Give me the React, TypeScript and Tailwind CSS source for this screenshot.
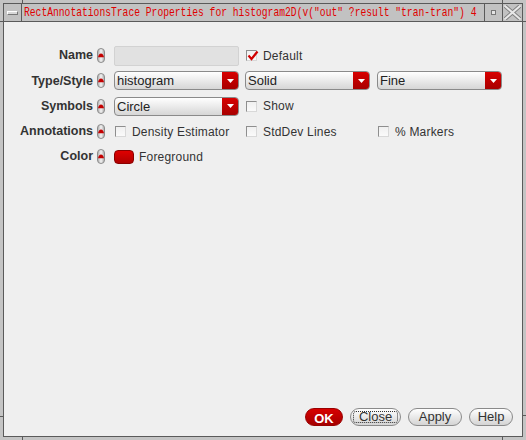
import React from "react";

const sans = "font-['Liberation_Sans',Arial,sans-serif]";

function Spinner() {
  return (
    <svg width="8" height="15" viewBox="0 0 8 15" className="shrink-0">
      <defs>
        <linearGradient id="spg" x1="0" y1="0" x2="1" y2="0">
          <stop offset="0" stopColor="#a8a8a8" />
          <stop offset="0.5" stopColor="#f4f4f4" />
          <stop offset="1" stopColor="#a8a8a8" />
        </linearGradient>
      </defs>
      <rect x="0.5" y="0.5" width="7" height="14" rx="3.5" fill="url(#spg)" stroke="#8c8c8c" />
      <path d="M1 9.2 C1.4 7 2.6 5.4 4 5.4 C5.4 5.4 6.6 7 7 9.2 Z" fill="#c40000" />
    </svg>
  );
}

function Checkbox({ checked }: { checked?: boolean }) {
  return (
    <div className="relative w-[11px] h-[11px] shrink-0 ml-[1px] border-t border-l border-[#8e8e8e] border-b border-r border-b-[#d8d8d8] border-r-[#d8d8d8] bg-gradient-to-b from-[#f0f0f0] to-[#fafafa]">
      {checked && (
        <svg width="12" height="11" viewBox="0 0 12 11" className="absolute left-[0px] top-[-1px]">
          <path d="M1.5 5.5 L4.5 9 L10.5 1.5" fill="none" stroke="#d00000" strokeWidth="2.2" />
        </svg>
      )}
    </div>
  );
}

function Combo({ value }: { value: string }) {
  return (
    <div className="flex w-[125px] h-[19px] rounded-[4px] border border-[#8a8a8a] bg-gradient-to-b from-white to-[#d6d6d6] overflow-hidden">
      <div className={`flex-1 pl-[2px] leading-[17px] text-[13px] text-[#222] ${sans}`}>{value}</div>
      <div className="w-[16px] h-full bg-gradient-to-b from-[#d80000] to-[#a80000] flex items-center justify-center">
        <svg width="7" height="4" viewBox="0 0 7 4">
          <path d="M0 0 L7 0 L3.5 4 Z" fill="#fff" />
        </svg>
      </div>
    </div>
  );
}

function CheckItem({ label, checked }: { label: string; checked?: boolean }) {
  return (
    <div className="flex items-center w-[125px]">
      <Checkbox checked={checked} />
      <span className={`ml-[6px] text-[12px] text-[#333] tracking-[0.2px] ${sans}`}>{label}</span>
    </div>
  );
}

function Row({ label, children }: { label: string; children: React.ReactNode }) {
  return (
    <div className="flex items-center h-[25.3px]">
      <div className={`w-[89px] text-right font-bold text-[12.5px] text-[#333] ${sans}`}>{label}</div>
      <div className="ml-[4px]">
        <Spinner />
      </div>
      <div className="ml-[9px] flex items-center gap-[6px]">{children}</div>
    </div>
  );
}

function PillButton({ label, focus }: { label: string; focus?: boolean }) {
  return (
    <button
      className={`relative h-[18px] rounded-full border border-[#8a8a8a] bg-gradient-to-b from-white to-[#d4d4d4] text-[13px] text-[#333] ${sans} flex items-center justify-center`}
    >
      {focus && <span className="absolute inset-x-[2px] inset-y-[2px] border border-dotted border-[#333] rounded-[3px]" />}
      {label}
    </button>
  );
}

export default function App() {
  return (
    <div className="relative w-[526px] h-[440px] bg-[#c4c4c4] p-[3px]">
      <div className="h-full border border-[#5a5a5a] flex flex-col">
        {/* title bar */}
        <div className="h-[18px] flex border-b border-[#5a5a5a] bg-[#c2c2c2] shrink-0">
          <div className="w-[18px] border-r border-[#5a5a5a] flex items-center justify-center">
            <div className="w-[11px] h-[4px] bg-[#d8d8d8] border-t border-l border-white border-b border-r border-b-[#777] border-r-[#777]" />
          </div>
          <div className="flex-1 overflow-hidden pl-[2px]">
            <div className="origin-left scale-x-[0.716] whitespace-nowrap font-['Liberation_Mono',monospace] text-[13.5px] leading-[17px] text-[#e00000]">
              RectAnnotationsTrace Properties for histogram2D(v("out" ?result "tran-tran") 4
            </div>
          </div>
          <div className="w-[18px] border-l border-[#5a5a5a] flex items-center justify-center">
            <div className="w-[5px] h-[5px] bg-[#e4e4e4] border border-[#777]" />
          </div>
          <div className="w-[20px] border-l border-[#5a5a5a] flex items-center justify-center">
            <svg width="17" height="15" viewBox="0 0 17 15">
              <path d="M1 1 L16 14 M16 1 L1 14" stroke="#808080" strokeWidth="4" strokeLinecap="square" />
              <path d="M1 1 L16 14 M16 1 L1 14" stroke="#e8e8e8" strokeWidth="2" strokeLinecap="square" />
            </svg>
          </div>
        </div>

        {/* content */}
        <div className="flex-1 bg-[#efefef] flex flex-col pt-[21px]">
          <Row label="Name">
            <div className="w-[125px] h-[20px] rounded-[2px] bg-[#e1e1e1] border border-[#d2d2d2]" />
            <CheckItem label="Default" checked />
          </Row>
          <Row label="Type/Style">
            <Combo value="histogram" />
            <Combo value="Solid" />
            <div className="ml-[1px]">
              <Combo value="Fine" />
            </div>
          </Row>
          <Row label="Symbols">
            <Combo value="Circle" />
            <CheckItem label="Show" />
          </Row>
          <Row label="Annotations">
            <CheckItem label="Density Estimator" />
            <CheckItem label="StdDev Lines" />
            <div className="ml-[1px]">
              <CheckItem label="% Markers" />
            </div>
          </Row>
          <Row label="Color">
            <div className="flex items-center">
              <div className="w-[20px] h-[14px] rounded-[4px] bg-gradient-to-b from-[#e00000] to-[#b00000] border border-[#8a0000]" />
              <span className={`ml-[5px] text-[12px] text-[#333] tracking-[0.2px] ${sans}`}>Foreground</span>
            </div>
          </Row>

          <div className="flex-1" />
          <div className="flex justify-end gap-[7px] pr-[9px] pb-[10px]">
            <button className={`w-[38px] h-[18px] rounded-full bg-gradient-to-b from-[#d80000] to-[#a40000] border border-[#900] text-white font-bold text-[13px] ${sans}`}>
              OK
            </button>
            <div className="w-[51px] flex flex-col">
              <PillButton label="Close" focus />
            </div>
            <div className="w-[54px] flex flex-col">
              <PillButton label="Apply" />
            </div>
            <div className="w-[44px] flex flex-col">
              <PillButton label="Help" />
            </div>
          </div>
        </div>
      </div>

      {/* frame resize handles */}
      <div className="absolute left-0 top-[21px] w-[3px] h-[1px] bg-[#5a5a5a]" />
      <div className="absolute left-0 top-[416px] w-[3px] h-[1px] bg-[#5a5a5a]" />
      <div className="absolute right-0 top-[21px] w-[3px] h-[1px] bg-[#5a5a5a]" />
      <div className="absolute right-0 top-[415px] w-[3px] h-[1px] bg-[#5a5a5a]" />
      <div className="absolute left-[22px] bottom-0 w-[1px] h-[3px] bg-[#5a5a5a]" />
      <div className="absolute left-[502px] bottom-0 w-[1px] h-[3px] bg-[#5a5a5a]" />
      <div className="absolute left-[22px] top-0 w-[1px] h-[3px] bg-[#5a5a5a]" />
      <div className="absolute left-[502px] top-0 w-[1px] h-[3px] bg-[#5a5a5a]" />
    </div>
  );
}
